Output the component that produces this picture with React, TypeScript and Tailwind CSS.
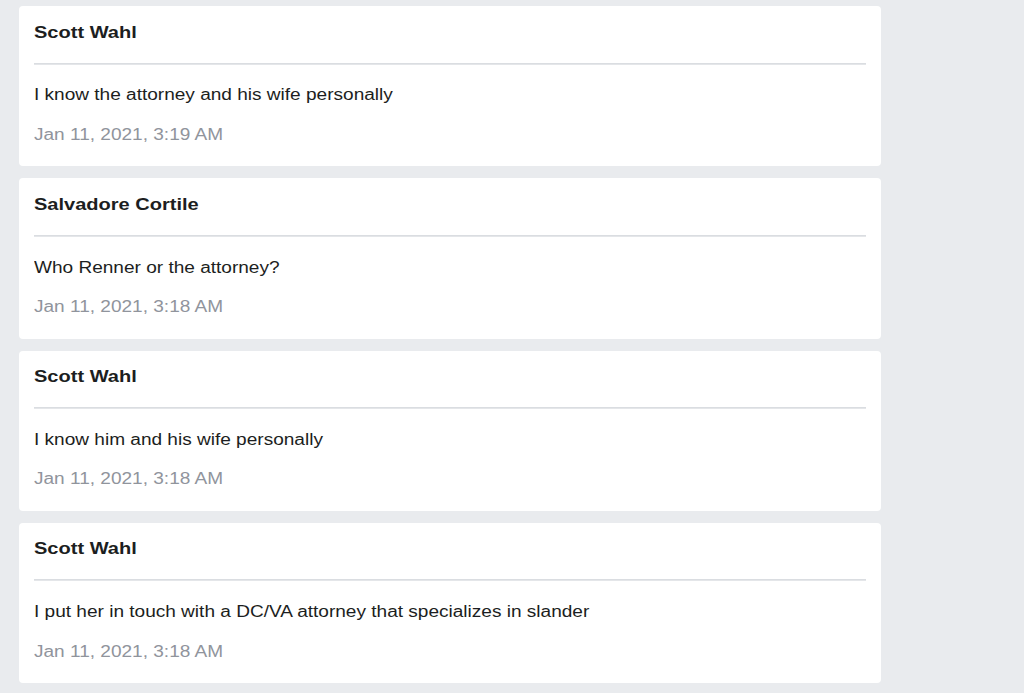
import React from "react";

const comments = [
  { name: "Scott Wahl", text: "I know the attorney and his wife personally", time: "Jan 11, 2021, 3:19 AM" },
  { name: "Salvadore Cortile", text: "Who Renner or the attorney?", time: "Jan 11, 2021, 3:18 AM" },
  { name: "Scott Wahl", text: "I know him and his wife personally", time: "Jan 11, 2021, 3:18 AM" },
  { name: "Scott Wahl", text: "I put her in touch with a DC/VA attorney that specializes in slander", time: "Jan 11, 2021, 3:18 AM" },
];

export default function App() {
  return (
    <div
      className="w-[1024px] h-[693px] overflow-hidden bg-[#e9ebee] pt-[6px] pl-[19px]"
      style={{ fontFamily: '"Liberation Sans", Arial, sans-serif' }}
    >
      <div className="flex w-[862px] flex-col gap-[12px]">
        {comments.map((c, i) => (
          <div key={i} className="rounded-[4px] bg-white px-[15px] pt-[16.5px] pb-[21.5px]">
            <div className="h-[20px] whitespace-nowrap text-[16.7px] leading-[20px] font-bold text-[#1c1e21]">
              <span className="inline-block origin-left scale-x-[1.2]">{c.name}</span>
            </div>
            <div className="mt-[20px] h-[2px] border-t border-[#dadde1] bg-[#e4e6e9]" />
            <div className="mt-[20.8px] h-[20px] whitespace-nowrap text-[16px] leading-[20px] text-[#1c1e21]">
              <span className="inline-block origin-left scale-x-[1.19]">{c.text}</span>
            </div>
            <div className="mt-[19.5px] h-[20px] whitespace-nowrap text-[16px] leading-[20px] text-[#90949c]">
              <span className="inline-block origin-left scale-x-[1.19]">{c.time}</span>
            </div>
          </div>
        ))}
      </div>
    </div>
  );
}
